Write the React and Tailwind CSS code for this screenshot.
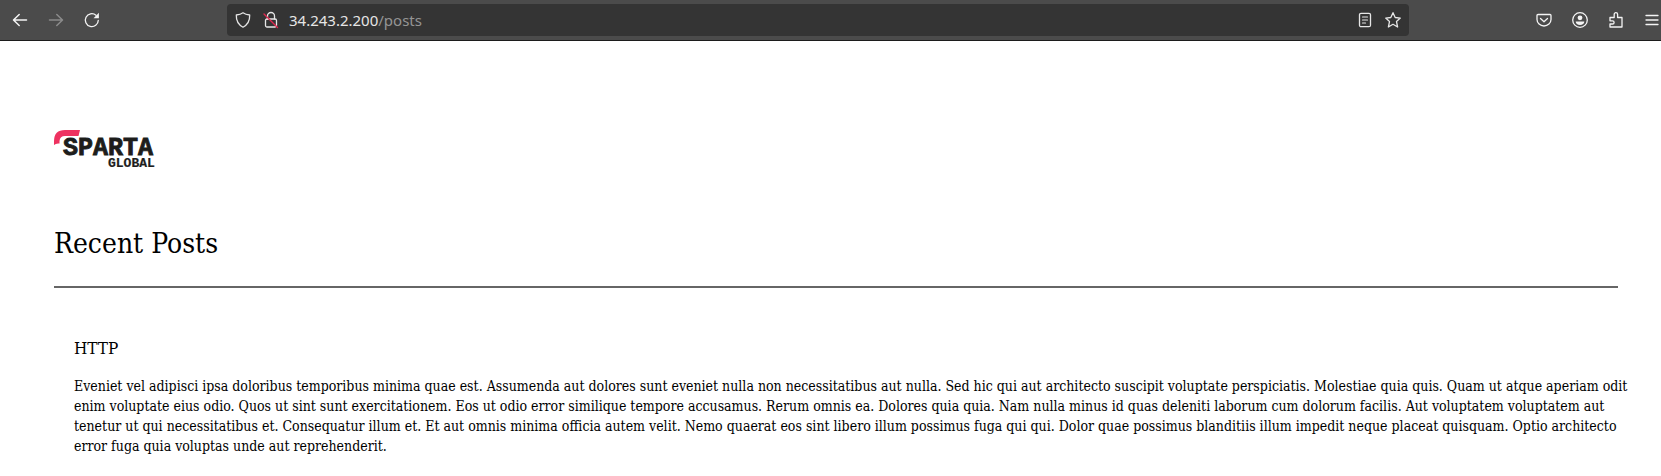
import React from "react";

function IconButton({ label, children, disabled = false }) {
  return (
    <button
      type="button"
      aria-label={label}
      disabled={disabled}
      className="flex size-9 shrink-0 items-center justify-center text-[#f4f4f4] disabled:text-[#8b8b8b]"
    >
      {children}
    </button>
  );
}

function Icon({ children }) {
  return (
    <svg
      viewBox="0 0 16 16"
      className="size-4 shrink-0 overflow-visible"
      fill="none"
      stroke="currentColor"
      strokeWidth="1.3"
      strokeLinecap="round"
      strokeLinejoin="round"
      aria-hidden="true"
    >
      {children}
    </svg>
  );
}

function Toolbar() {
  return (
    <header className="flex h-[41px] items-start border-b border-[#1c1c1c] bg-[#4b4b4b] pt-1 pb-1">
      <nav className="-mt-0.5 flex w-[227px] shrink-0 pl-0.5">
        <IconButton label="Back">
          <Icon>
            <path d="M14.500 8H1.800M7.200 2.500 1.500 8 7.200 13.500" strokeWidth="1.500" />
          </Icon>
        </IconButton>
        <IconButton label="Forward" disabled>
          <Icon>
            <path d="M1.500 8h12.700M8.800 2.500 14.500 8 8.800 13.500" strokeWidth="1.500" />
          </Icon>
        </IconButton>
        <IconButton label="Reload">
          <Icon>
            <path d="M14.300 8.300A6.500 6.500 0 1 1 12 3.200" />
            <path d="M14.900 .800v5.400H9.500Z" fill="currentColor" stroke="none" />
          </Icon>
        </IconButton>
      </nav>
      <div className="flex h-8 min-w-0 flex-1 items-center rounded bg-[#343434] px-2 text-[#e6e6e6]">
        <button type="button" aria-label="Tracking protection" className="mr-3 flex">
          <Icon>
            <path d="M8 .800c2 1.500 4.300 2 6.700 2.200.200 5.500-1.700 9.500-6.700 12.200C3 12.500 1.100 8.500 1.300 3 3.700 2.800 6 2.300 8 .800Z" />
          </Icon>
        </button>
        <button type="button" aria-label="Connection not secure" className="mr-2.5 flex">
          <Icon>
            <rect x="2.500" y="7" width="11" height="8" rx="1.500" />
            <path d="M4.500 7V4a3.500 3.500 0 0 1 7 0v3" />
            <path d="M1 2l13.500 13.500" stroke="#e22850" strokeWidth="1.400" />
          </Icon>
        </button>
        <a href="#posts" className="min-w-0 flex-1 truncate font-['Noto_Sans',sans-serif] text-[15px] leading-5">
          34.243.2.200<span className="text-[#949494]">/posts</span>
        </a>
        <button type="button" aria-label="Reader view" className="mr-3 flex">
          <Icon>
            <rect x="2.500" y="1.300" width="11" height="13.400" rx="1.500" />
            <path d="M5.500 5h5M5.500 8h5M5.500 11h3" strokeWidth="1.200" />
          </Icon>
        </button>
        <button type="button" aria-label="Bookmark" className="flex">
          <Icon>
            <path d="m8 .700 2.200 4.800 5.100.600-3.800 3.500 1.100 5.400L8 12.300 3.400 15l1.100-5.400L.700 6.100l5.100-.600Z" />
          </Icon>
        </button>
      </div>
      <div className="-mt-0.5 flex w-[252px] shrink-0 overflow-hidden pl-[117px]">
        <IconButton label="Save to Pocket">
          <Icon>
            <path d="M2 2.500h12a1 1 0 0 1 1 1v4a7 6.500 0 0 1-14 0v-4a1 1 0 0 1 1-1ZM4.500 6.500 8 9.700l3.500-3.200" />
          </Icon>
        </IconButton>
        <IconButton label="Account">
          <Icon>
            <circle cx="8" cy="8" r="7.300" />
            <circle cx="8" cy="5.800" r="2.400" fill="currentColor" stroke="none" />
            <path d="M3.700 9.500h8.600c0 2-1.800 3.500-4.300 3.500s-4.300-1.500-4.300-3.500Z" fill="currentColor" stroke="none" />
          </Icon>
        </IconButton>
        <IconButton label="Extensions">
          <Icon>
            <path d="M2 5.500h4.200V2.300a1.700 1.700 0 0 1 3.400 0v3.200H14V15H2v-3h2.500a1.600 1.600 0 0 0 0-3.200H2Z" />
          </Icon>
        </IconButton>
        <IconButton label="Menu">
          <Icon>
            <path d="M2 3.500h12M2 8h12M2 12.500h12" />
          </Icon>
        </IconButton>
      </div>
    </header>
  );
}

function Logo() {
  return (
    <a href="#home" aria-label="Sparta Global" className="block w-[104px]">
      <svg viewBox="0 0 104 40" className="block w-full" aria-hidden="true">
        <path d="M0 15V11Q0 0 11 0H26L24.500 6H11Q6 6 5.500 11V13.500Q2 13 0 15Z" fill="#ee3260" />
        <g
          fill="#1d1d1b"
          stroke="#1d1d1b"
          className="font-['Liberation_Mono',monospace] font-bold"
        >
          <text x="9" y="25" strokeWidth="0.900" className="text-[25px]">
            SPARTA
          </text>
          <text x="54" y="37" strokeWidth="0.200" className="text-[13px]">
            GLOBAL
          </text>
        </g>
      </svg>
    </a>
  );
}

export default function App() {
  return (
    <div className="min-h-screen bg-white text-black">
      <Toolbar />
      <main className="pt-[89px] pr-[43px] pb-4 pl-[54px] font-['DejaVu_Serif_Condensed','DejaVu_Serif',serif]">
        <Logo />
        <h1 className="mt-14 text-[28px] leading-9">Recent Posts</h1>
        <hr className="mt-6 border-t-2 border-[#666666]" />
        <article id="posts" className="-mr-3 pt-12 pl-5">
          <h2 className="text-[17px] leading-6">HTTP</h2>
          <p className="mt-4 text-sm leading-5">
            Eveniet vel adipisci ipsa doloribus temporibus minima quae est. Assumenda aut dolores sunt eveniet nulla non necessitatibus aut nulla. Sed hic qui aut architecto suscipit voluptate perspiciatis. Molestiae quia quis. Quam ut atque aperiam odit
            <br />
            enim voluptate eius odio. Quos ut sint sunt exercitationem. Eos ut odio error similique tempore accusamus. Rerum omnis ea. Dolores quia quia. Nam nulla minus id quas deleniti laborum cum dolorum facilis. Aut voluptatem voluptatem aut
            <br />
            tenetur ut qui necessitatibus et. Consequatur illum et. Et aut omnis minima officia autem velit. Nemo quaerat eos sint libero illum possimus fuga qui qui. Dolor quae possimus blanditiis illum impedit neque placeat quisquam. Optio architecto
            <br />
            error fuga quia voluptas unde aut reprehenderit.
          </p>
        </article>
      </main>
    </div>
  );
}
